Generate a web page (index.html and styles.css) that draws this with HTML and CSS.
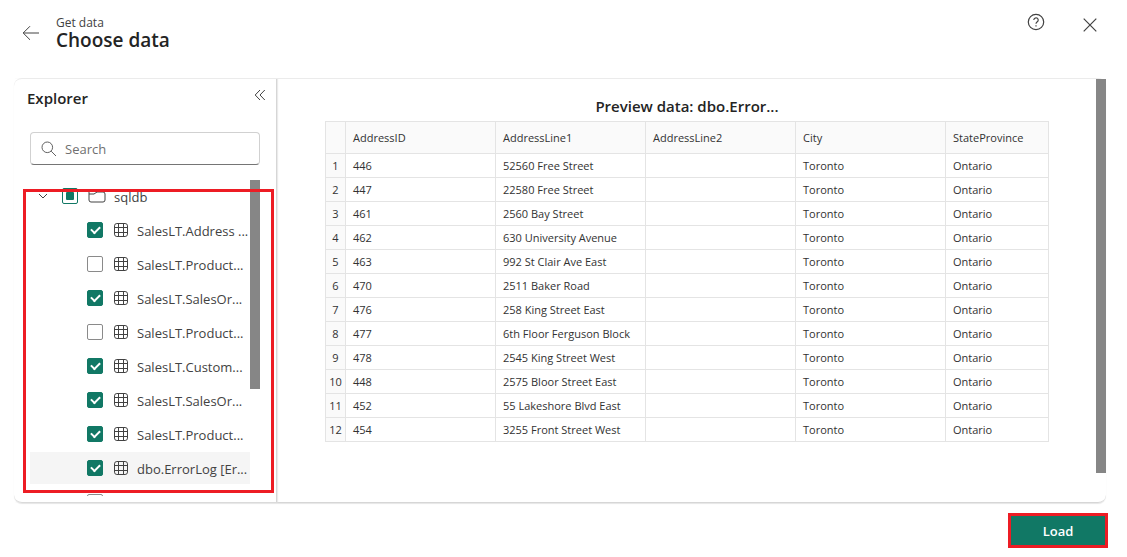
FILE: index.html
```
<!DOCTYPE html>
<html lang="en">
<head>
<meta charset="utf-8">
<title>Choose data</title>
<link rel="stylesheet" href="styles.css">
</head>
<body>
<svg class="sprite" aria-hidden="true">
  <symbol id="grid" viewBox="0 0 16 16"><rect x="1.5" y="1.5" width="13" height="13" rx="2.4"/><path d="M5.500 1.500v13M10.500 1.500v13M1.500 5.500h13M1.500 10.500h13"/></symbol>
</svg>
<header class="header">
  <button class="icon-button" type="button" aria-label="Back"><svg class="icon" width="18" height="16" viewBox="0 0 18 16"><path d="M8 1.200L1.200 8 8 14.800M1.200 8H17"/></svg></button>
  <div class="titles">
    <p class="subtitle">Get data</p>
    <h1 class="title">Choose data</h1>
  </div>
  <div class="header-actions">
    <button class="icon-button help" type="button" aria-label="Help"><svg class="icon" width="18" height="18" viewBox="0 0 18 18"><circle cx="9" cy="9" r="7.700"/><path d="M6.800 7a2.200 2.200 0 1 1 3.500 1.800C9.400 9.500 9 9.800 9 10.800"/><path d="M9 12.300v1.200"/></svg></button>
    <button class="icon-button close" type="button" aria-label="Close"><svg class="icon" width="14" height="14" viewBox="0 0 14 14"><path d="M.7.7l12.600 12.600M13.300.7L.7 13.300"/></svg></button>
  </div>
</header>
<main class="panel">
  <aside class="explorer">
    <div class="explorer-head">
      <h2 class="heading">Explorer</h2>
      <button class="icon-button" type="button" aria-label="Collapse explorer"><svg class="icon" width="12" height="12" viewBox="0 0 12 12"><path d="M6 1L1.200 6 6 11M10.800 1L6 6l4.800 5"/></svg></button>
    </div>
    <div class="search">
      <svg class="icon" width="16" height="16" viewBox="0 0 16 16"><circle cx="6.300" cy="6.300" r="5.300"/><path d="M10.200 10.200L15 15"/></svg>
      <input class="search-input" type="text" placeholder="Search" aria-label="Search">
    </div>
    <div class="tree">
      <div class="tree-rows">
        <div class="row root">
          <button class="icon-button" type="button" aria-label="Collapse sqldb"><svg class="icon" width="10" height="6" viewBox="0 0 10 6"><path d="M1 1l4 4 4-4"/></svg></button>
          <input class="check partial" type="checkbox" id="db">
          <label class="row-label" for="db"><svg class="icon" width="18" height="14" viewBox="0 0 18 14"><path d="M1 11V3a2 2 0 0 1 2-2h3.500L9 3h6a2 2 0 0 1 2 2v6a2 2 0 0 1-2 2H3a2 2 0 0 1-2-2zM1 5h5l3-2"/></svg><span class="name">sqldb</span></label>
        </div>
        <div class="row"><input class="check" type="checkbox" id="t1" checked><label class="row-label" for="t1"><svg class="icon" width="16" height="16"><use href="#grid"/></svg><span class="name">SalesLT.Address ...</span></label></div>
        <div class="row"><input class="check" type="checkbox" id="t2"><label class="row-label" for="t2"><svg class="icon" width="16" height="16"><use href="#grid"/></svg><span class="name">SalesLT.Product...</span></label></div>
        <div class="row"><input class="check" type="checkbox" id="t3" checked><label class="row-label" for="t3"><svg class="icon" width="16" height="16"><use href="#grid"/></svg><span class="name">SalesLT.SalesOr...</span></label></div>
        <div class="row"><input class="check" type="checkbox" id="t4"><label class="row-label" for="t4"><svg class="icon" width="16" height="16"><use href="#grid"/></svg><span class="name">SalesLT.Product...</span></label></div>
        <div class="row"><input class="check" type="checkbox" id="t5" checked><label class="row-label" for="t5"><svg class="icon" width="16" height="16"><use href="#grid"/></svg><span class="name">SalesLT.Custom...</span></label></div>
        <div class="row"><input class="check" type="checkbox" id="t6" checked><label class="row-label" for="t6"><svg class="icon" width="16" height="16"><use href="#grid"/></svg><span class="name">SalesLT.SalesOr...</span></label></div>
        <div class="row"><input class="check" type="checkbox" id="t7" checked><label class="row-label" for="t7"><svg class="icon" width="16" height="16"><use href="#grid"/></svg><span class="name">SalesLT.Product...</span></label></div>
        <div class="row selected"><input class="check" type="checkbox" id="t8" checked><label class="row-label" for="t8"><svg class="icon" width="16" height="16"><use href="#grid"/></svg><span class="name">dbo.ErrorLog [Er...</span></label></div>
        <div class="row"><input class="check" type="checkbox" aria-label="Next table"></div>
      </div>
      <div class="thumb"></div>
    </div>
    <div class="callout"></div>
  </aside>
  <section class="preview">
    <h2 class="heading preview-title">Preview data: dbo.Error...</h2>
    <table class="data">
      <colgroup><col class="col-index"><col class="col"><col class="col"><col class="col"><col class="col"><col></colgroup>
      <thead><tr><th></th><th>AddressID</th><th>AddressLine1</th><th>AddressLine2</th><th>City</th><th>StateProvince</th></tr></thead>
      <tbody>
        <tr><th>1</th><td>446</td><td>52560 Free Street</td><td></td><td>Toronto</td><td>Ontario</td></tr>
        <tr><th>2</th><td>447</td><td>22580 Free Street</td><td></td><td>Toronto</td><td>Ontario</td></tr>
        <tr><th>3</th><td>461</td><td>2560 Bay Street</td><td></td><td>Toronto</td><td>Ontario</td></tr>
        <tr><th>4</th><td>462</td><td>630 University Avenue</td><td></td><td>Toronto</td><td>Ontario</td></tr>
        <tr><th>5</th><td>463</td><td>992 St Clair Ave East</td><td></td><td>Toronto</td><td>Ontario</td></tr>
        <tr><th>6</th><td>470</td><td>2511 Baker Road</td><td></td><td>Toronto</td><td>Ontario</td></tr>
        <tr><th>7</th><td>476</td><td>258 King Street East</td><td></td><td>Toronto</td><td>Ontario</td></tr>
        <tr><th>8</th><td>477</td><td>6th Floor Ferguson Block</td><td></td><td>Toronto</td><td>Ontario</td></tr>
        <tr><th>9</th><td>478</td><td>2545 King Street West</td><td></td><td>Toronto</td><td>Ontario</td></tr>
        <tr><th>10</th><td>448</td><td>2575 Bloor Street East</td><td></td><td>Toronto</td><td>Ontario</td></tr>
        <tr><th>11</th><td>452</td><td>55 Lakeshore Blvd East</td><td></td><td>Toronto</td><td>Ontario</td></tr>
        <tr><th>12</th><td>454</td><td>3255 Front Street West</td><td></td><td>Toronto</td><td>Ontario</td></tr>
      </tbody>
    </table>
  </section>
  <div class="preview-thumb"></div>
</main>
<footer class="footer"><button class="load" type="button">Load</button></footer>
</body>
</html>
```
FILE: styles.css
```
* { box-sizing: border-box; }
body {
  margin: 0;
  height: 100vh;
  display: flex;
  flex-direction: column;
  background: #fff;
  color: #242424;
  font-family: "Open Sans", "Noto Sans", sans-serif;
}
h1, h2, p { margin: 0; }
.sprite { position: absolute; width: 0; height: 0; }
.icon { flex: none; display: block; fill: none; stroke: #424242; stroke-width: 1; }
.icon-button { border: 0; padding: 0; background: none; cursor: pointer; }

.header { display: flex; align-items: flex-start; gap: 16px; height: 78px; padding: 15px 22px 0; flex: none; }
.header > .icon-button { margin-top: 10px; }
.subtitle { font-size: 12px; line-height: 16px; color: #424242; }
.title { font-size: 19px; line-height: 18px; font-weight: 600; }
.header-actions { display: flex; gap: 38px; margin-left: auto; padding-right: 8px; }
.header-actions .icon { stroke-width: 1.2; }
.help { margin-top: -3px; }
.close { margin-top: 3px; }

.panel {
  flex: 1;
  min-height: 0;
  display: flex;
  margin: 0 21px 0 14px;
  border-top: 1px solid #ebebeb;
  border-bottom: 1px solid #d6d6d6;
  border-radius: 8px;
  box-shadow: 0 1px 1px #e6e6e6;
}
.explorer {
  position: relative;
  flex: none;
  width: 263px;
  display: flex;
  flex-direction: column;
  padding: 8px 16px 6px;
  border-right: 1px solid #d6d6d6;
  box-shadow: 1px 0 1px #ebebeb;
}
.heading { font-size: 15px; line-height: 22px; font-weight: 600; }
.explorer-head { display: flex; justify-content: space-between; align-items: flex-start; margin: 0 -8px 0 -3px; }
.explorer-head .icon-button { padding: 2px; }
.search {
  display: flex;
  align-items: center;
  gap: 8px;
  height: 33px;
  margin-top: 23px;
  padding: 0 10px;
  border: 1px solid #d1d1d1;
  border-bottom-color: #757575;
  border-radius: 4px;
}
.search .icon { stroke: #616161; }
.search-input { flex: 1; min-width: 0; border: 0; padding: 0; outline: 0; background: none; font: 13px "Open Sans", sans-serif; color: #424242; }
.search-input::placeholder { color: #707070; opacity: 1; }

.tree { flex: 1; min-height: 0; display: flex; margin-top: 15px; overflow: hidden; }
.tree-rows { flex: 1; min-width: 0; display: flex; flex-direction: column; gap: 2px; }
.row { flex: none; display: flex; align-items: center; gap: 10px; height: 32px; padding-left: 57px; }
.root { padding-left: 8px; gap: 10px; }
.root .icon-button { padding: 0 4px 0 0; }
.selected { background: #f5f5f5; }
.row-label { flex: 1; min-width: 0; display: flex; align-items: center; gap: 8px; }
.name { font-size: 13px; line-height: 20px; padding-top: 1px; color: #424242; white-space: nowrap; }
.check {
  appearance: none;
  flex: none;
  display: grid;
  place-items: center;
  width: 16px;
  height: 16px;
  margin: 0;
  border: 1px solid #8a8a8a;
  border-radius: 2px;
  background: #fff;
}
.check:checked { background: #117865; border-color: #117865; }
.check:checked::after {
  content: "";
  width: 7px;
  height: 4px;
  margin-bottom: 2px;
  border: solid #fff;
  border-width: 0 0 2px 2px;
  transform: rotate(-45deg);
}
.partial { border-color: #117865; }
.partial::after { content: ""; width: 8px; height: 8px; border-radius: 1px; background: #117865; }
.thumb { flex: none; width: 10px; height: 209px; background: #868686; }
.callout { position: absolute; inset: 110px 2px 9px 9px; border: 3px solid #ed1c24; pointer-events: none; }

.preview { flex: 1; min-width: 0; padding: 16px 47px 0 48px; }
.preview-title { text-align: center; margin-bottom: 4px; }
.preview-thumb { flex: none; width: 10px; margin-bottom: 29px; background: #868686; }
.data { width: 100%; table-layout: fixed; border-collapse: collapse; font-size: 11px; line-height: 16px; color: #323232; }
.col-index { width: 20px; }
.col { width: 150px; }
.data th, .data td { height: 24px; padding: 1px 7px 0; border: 1px solid #e4e4e4; text-align: left; font-weight: 400; white-space: nowrap; }
.data thead th { height: 32px; background: #fafafa; }
.data tbody th { padding: 1px 0 0; text-align: center; background: #fafafa; }

.footer { flex: none; display: flex; justify-content: flex-end; padding: 10px 19px 9px; }
.load {
  width: 100px;
  height: 35px;
  border: 3px solid #ed1c24;
  background: #117865;
  color: #fff;
  font: 600 13px "Open Sans", sans-serif;
}
```
